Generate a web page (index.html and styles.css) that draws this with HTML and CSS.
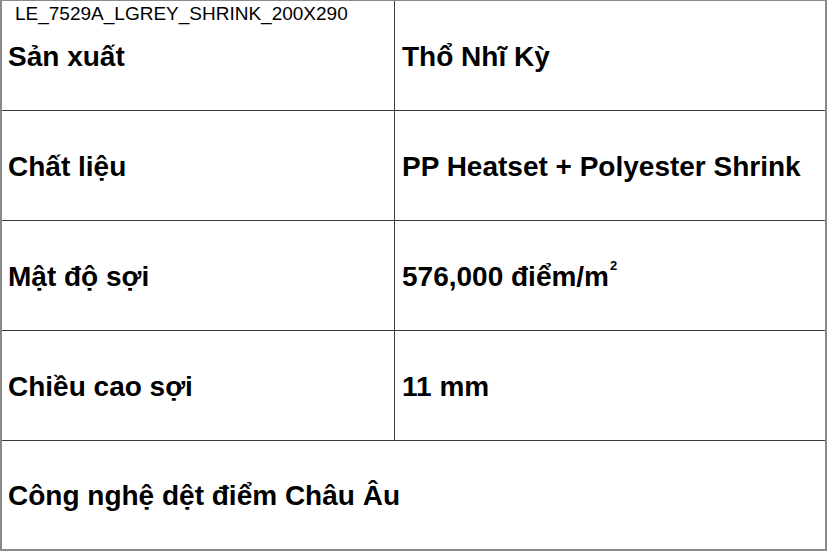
FILE: index.html
```html
<!DOCTYPE html>
<html lang="vi">
<head>
<meta charset="utf-8">
<title>LE_7529A_LGREY_SHRINK_200X290</title>
<link rel="stylesheet" href="styles.css">
</head>
<body>
<div class="sheet">
  <div class="code">LE_7529A_LGREY_SHRINK_200X290</div>
  <div class="spec">
    <div class="cell label">Sản xuất</div>
    <div class="cell value">Thổ Nhĩ Kỳ</div>
    <div class="cell label row">Chất liệu</div>
    <div class="cell value row">PP Heatset + Polyester Shrink</div>
    <div class="cell label row">Mật độ sợi</div>
    <div class="cell value row">576,000 điểm/m<sup class="sup">2</sup></div>
    <div class="cell label row">Chiều cao sợi</div>
    <div class="cell value row">11 mm</div>
    <div class="cell full row last">Công nghệ dệt điểm Châu Âu</div>
  </div>
</div>
</body>
</html>
```
FILE: styles.css
```css
html, body {
  margin: 0;
  padding: 0;
  background: #ffffff;
}
body {
  width: 827px;
  height: 551px;
  overflow: hidden;
  font-family: "Liberation Sans", Arial, sans-serif;
  color: #000;
}
.sheet {
  position: relative;
  width: 827px;
  height: 551px;
  box-sizing: border-box;
  border-top: 1px solid #8a8a8a;
  border-left: 2px solid #8a8a8a;
  border-right: 2px solid #8a8a8a;
  border-bottom: 2px solid #8a8a8a;
}
.code {
  position: absolute;
  top: 2px;
  left: 13px;
  font-size: 19px;
  line-height: 22px;
  font-weight: normal;
}
.spec {
  display: grid;
  grid-template-columns: 392px 1fr;
  grid-template-rows: 109px 110px 110px 110px 108px;
}
.cell {
  display: flex;
  align-items: center;
  box-sizing: border-box;
  padding: 2px 6px 0 6px;
  font-size: 28px;
  line-height: 32px;
  font-weight: bold;
  white-space: nowrap;
}
.row {
  border-top: 1px solid #3a3a3a;
}
.value {
  border-left: 1px solid #3a3a3a;
  padding-left: 7px;
}
.full {
  grid-column: 1 / span 2;
}
.sup {
  font-size: 13px;
  line-height: 0;
  position: relative;
  top: -11px;
  vertical-align: baseline;
  margin-left: 1px;
}
```
